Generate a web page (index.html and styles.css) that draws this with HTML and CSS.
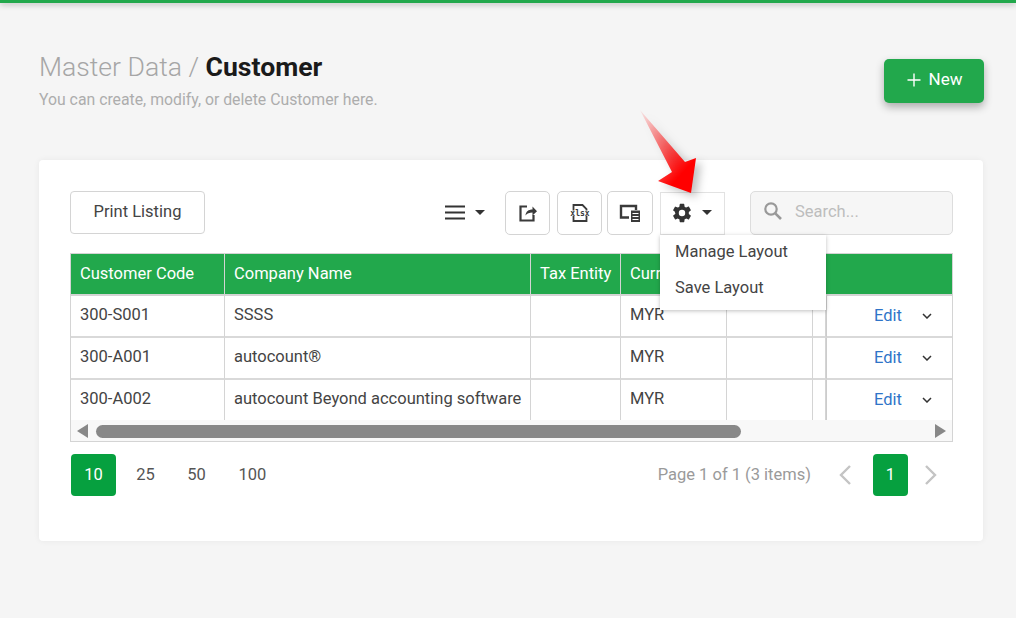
FILE: index.html
```html
<!DOCTYPE html>
<html lang="en">
<head>
<meta charset="utf-8">
<title>Customer</title>
<link rel="stylesheet" href="styles.css">
</head>
<body>
<div class="topbar"></div>
<main class="page">
  <header class="head">
    <div class="titles">
      <h1 class="title"><span class="crumb">Master Data / </span><strong>Customer</strong></h1>
      <p class="sub">You can create, modify, or delete Customer here.</p>
    </div>
    <button class="new-btn"><svg class="plus" viewBox="0 0 14 14" width="14" height="14"><path d="M7 0.5v13M0.5 7h13" stroke="#fff" stroke-width="1.4" fill="none"/></svg>New</button>
  </header>

  <section class="card">
    <div class="toolbar">
      <button class="print-btn">Print Listing</button>
      <div class="tools">
        <div class="menu-tool">
          <svg viewBox="0 0 20 15" width="20" height="15"><path d="M0 1.5h20M0 7.5h20M0 13.5h20" stroke="#333" stroke-width="2.2" fill="none"/></svg>
          <span class="caret"></span>
        </div>
        <button class="icon-btn">
          <svg viewBox="0 0 20 20" width="20" height="20"><path d="M9 3.500H2.500v14h13V12" fill="none" stroke="#3a3a3a" stroke-width="2.200"/><path d="M7.500 12.500c.3-4 3-6 7-6V3.500l4.500 4.700-4.500 4.300V9.600c-3 0-5.300.8-7 2.900z" fill="#3a3a3a"/></svg>
        </button>
        <button class="icon-btn second">
          <svg class="xlsx-icon" viewBox="0 0 20 20" width="20" height="20"><path d="M3.500 7.500V2h9l4 4v1.500M3.500 13v5h13v-5" fill="none" stroke="#3a3a3a" stroke-width="1.800"/><text x="10" y="12.700" class="xlsx">xlsx</text></svg>
        </button>
        <button class="icon-btn third">
          <svg viewBox="0 0 22 20" width="22" height="20"><path d="M10 14.500H2V3h15v4" fill="none" stroke="#3a3a3a" stroke-width="2.400"/><path d="M12 7.500h9V19h-9z" fill="#3a3a3a"/><path d="M13.500 10.500h6M13.500 13.500h6M13.500 16.500h6" stroke="#fff" stroke-width="1"/></svg>
        </button>
        <div class="gear-wrap">
          <button class="gear-btn">
            <svg viewBox="0 0 24 24" width="22" height="22"><path fill="#333" fill-rule="evenodd" d="M19.400 13c.04-.3.1-.7.100-1s-.06-.7-.1-1l2.100-1.650c.2-.15.250-.4.130-.64l-2-3.460c-.120-.22-.390-.300-.610-.220l-2.490 1c-.52-.4-1.080-.73-1.690-.98l-.38-2.650A.49.49 0 0 0 14 2h-4a.49.49 0 0 0-.49.420l-.38 2.650c-.61.250-1.170.59-1.690.98l-2.490-1a.5.5 0 0 0-.61.220l-2 3.460c-.130.220-.070.490.120.640L4.570 11c-.04.3-.7.650-.07 1s.03.7.07 1l-2.110 1.650c-.19.150-.24.420-.12.640l2 3.460c.12.220.39.300.61.220l2.490-1c.52.4 1.080.73 1.690.98l.38 2.650c.03.240.240.420.490.420h4c.250 0 .460-.180.490-.420l.38-2.650c.61-.250 1.170-.59 1.690-.98l2.490 1c.220.080.490 0 .610-.220l2-3.460c.120-.220.070-.490-.120-.640zM12 15.500a3.500 3.500 0 1 1 0-7 3.500 3.500 0 0 1 0 7z"/></svg>
            <span class="caret"></span>
          </button>
          <ul class="dropdown">
            <li>Manage Layout</li>
            <li>Save Layout</li>
          </ul>
        </div>
        <label class="search">
          <svg viewBox="0 0 20 20" width="20" height="20"><circle cx="8" cy="8" r="5.700" fill="none" stroke="#999" stroke-width="2.200"/><path d="M12.300 12.300l5.700 5.700" stroke="#999" stroke-width="2.600"/></svg>
          <span>Search...</span>
        </label>
      </div>
    </div>

    <div class="grid">
      <table class="data">
        <colgroup>
          <col class="c1"><col class="c2"><col class="c3"><col class="c4"><col class="c5"><col class="c6"><col class="c7">
        </colgroup>
        <thead>
          <tr><th>Customer Code</th><th>Company Name</th><th>Tax Entity</th><th>Currency</th><th></th><th></th><th class="last"></th></tr>
        </thead>
        <tbody>
          <tr><td>300-S001</td><td>SSSS</td><td></td><td>MYR</td><td></td><td></td><td class="last"><a class="edit">Edit</a><svg class="chev" viewBox="0 0 10 6" width="10" height="6"><path d="M1 1l4 4 4-4" fill="none" stroke="#333" stroke-width="1.500"/></svg></td></tr>
          <tr><td>300-A001</td><td>autocount®</td><td></td><td>MYR</td><td></td><td></td><td class="last"><a class="edit">Edit</a><svg class="chev" viewBox="0 0 10 6" width="10" height="6"><path d="M1 1l4 4 4-4" fill="none" stroke="#333" stroke-width="1.500"/></svg></td></tr>
          <tr><td>300-A002</td><td>autocount Beyond accounting software</td><td></td><td>MYR</td><td></td><td></td><td class="last"><a class="edit">Edit</a><svg class="chev" viewBox="0 0 10 6" width="10" height="6"><path d="M1 1l4 4 4-4" fill="none" stroke="#333" stroke-width="1.500"/></svg></td></tr>
        </tbody>
      </table>
      <div class="scrollbar">
        <span class="arrow-l"></span>
        <span class="thumb"></span>
        <span class="arrow-r"></span>
      </div>
    </div>

    <div class="pager">
      <div class="sizes">
        <span class="size on">10</span><span class="size">25</span><span class="size">50</span><span class="size">100</span>
      </div>
      <div class="pages">
        <span class="summary">Page 1 of 1 (3 items)</span>
        <svg class="nav" viewBox="0 0 14 22" width="14" height="22"><path d="M12 2L3 11l9 9" fill="none" stroke="#c4c4c4" stroke-width="2.400"/></svg>
        <span class="page-no">1</span>
        <svg class="nav" viewBox="0 0 14 22" width="14" height="22"><path d="M2 2l9 9-9 9" fill="none" stroke="#c4c4c4" stroke-width="2.400"/></svg>
      </div>
    </div>
  </section>
</main>
<svg class="pointer" viewBox="0 0 70 95" width="70" height="95">
  <defs>
    <linearGradient id="redfade" x1="0" y1="0" x2="0.75" y2="1">
      <stop offset="0" stop-color="#f00" stop-opacity="0.05"/>
      <stop offset="0.5" stop-color="#f00" stop-opacity="0.6"/>
      <stop offset="0.85" stop-color="#f00"/>
    </linearGradient>
  </defs>
  <path d="M5 5L50 57 61 53 56 88 23 76 37 67Z" fill="url(#redfade)"/>
</svg>
</body>
</html>
```
FILE: styles.css
```css
* { box-sizing: border-box; }
html, body { margin: 0; height: 100%; }
body {
  width: 1016px;
  height: 618px;
  overflow: hidden;
  position: relative;
  background: #f5f5f5;
  font-family: Roboto, "Liberation Sans", sans-serif;
  font-size: 16.5px;
  color: #444;
}
.topbar {
  height: 3px;
  background: #22a84c;
  box-shadow: 0 1px 6px rgba(0,0,0,.35);
}
.page { padding: 48px 33px 0 39px; }
.head {
  display: flex;
  justify-content: space-between;
  align-items: flex-start;
  height: 109px;
}
.title {
  margin: 0;
  font-size: 26.600px;
  line-height: 32px;
  font-weight: 400;
  color: #1a1a1a;
}
.title strong { font-weight: 700; }
.crumb { font-weight: 300; color: #a6a6a6; }
.sub {
  margin: 7px 0 0;
  font-size: 15.800px;
  line-height: 20px;
  color: #adadad;
}
.new-btn {
  display: flex;
  align-items: center;
  justify-content: center;
  gap: 8px;
  width: 100px;
  height: 44px;
  margin-top: 8px;
  margin-right: -1px;
  padding: 0 0 5px 1px;
  border: 0;
  border-radius: 5px;
  background: #22a84c;
  color: #fff;
  font: 400 17px Roboto, sans-serif;
  box-shadow: 0 4px 8px rgba(0,0,0,.3);
}
.plus { margin-top: 3px; }
.card {
  height: 381px;
  background: #fff;
  border-radius: 4px;
  padding: 31px 30px 0 31px;
  box-shadow: 0 0 6px rgba(0,0,0,.06);
}
.toolbar {
  display: flex;
  justify-content: space-between;
  align-items: flex-start;
  height: 62px;
}
.print-btn {
  width: 135px;
  height: 43px;
  padding: 0 0 3px;
  border: 1px solid #d4d4d4;
  border-radius: 4px;
  background: #fff;
  color: #444;
  font: 400 16.500px Roboto, sans-serif;
}
.tools { display: flex; align-items: flex-start; }
.menu-tool {
  display: flex;
  align-items: center;
  gap: 10px;
  height: 42px;
  width: 60px;
}
.caret {
  display: inline-block;
  width: 0;
  height: 0;
  border-left: 5px solid transparent;
  border-right: 5px solid transparent;
  border-top: 5px solid #333;
}
.icon-btn {
  display: flex;
  align-items: center;
  justify-content: center;
  width: 45px;
  height: 44px;
  margin-right: 7px;
  padding: 0 0 1px;
  border: 1px solid #d4d4d4;
  border-radius: 5px;
  background: #fff;
}
.icon-btn.second { margin-right: 5px; }
.icon-btn.third { width: 46px; }
.xlsx-icon { overflow: visible; }
.xlsx {
  font: 700 8px "DejaVu Sans Mono", monospace;
  fill: #3a3a3a;
  text-anchor: middle;
}
.gear-wrap { position: relative; width: 65px; margin-right: 25px; }
.gear-btn {
  display: flex;
  align-items: center;
  gap: 9px;
  width: 65px;
  height: 43px;
  margin-top: 1px;
  padding: 0 0 2px 10px;
  border: 1px solid #e2e2e2;
  background: #fff;
}
.dropdown {
  position: absolute;
  top: 44px;
  left: 0;
  z-index: 5;
  width: 166px;
  height: 75px;
  margin: 0;
  padding: 0;
  list-style: none;
  background: #fff;
  box-shadow: 0 1px 4px rgba(0,0,0,.25);
}
.dropdown li {
  height: 36px;
  padding: 0 15px;
  line-height: 33px;
  color: #444;
}
.search {
  display: flex;
  align-items: center;
  gap: 12px;
  width: 203px;
  height: 44px;
  padding: 0 0 4px 12px;
  border: 1px solid #ddd;
  border-radius: 5px;
  background: #f6f6f6;
  color: #bdbdbd;
}
.grid {
  width: 883px;
  height: 189px;
  border: 1px solid #d4d4d4;
  overflow: hidden;
}
.data {
  width: 881px;
  table-layout: fixed;
  border-collapse: separate;
  border-spacing: 0;
}
.c1 { width: 154px; }
.c2 { width: 306px; }
.c3 { width: 90px; }
.c4 { width: 106px; }
.c5 { width: 86px; }
.c6 { width: 13px; }
.c7 { width: 126px; }
th {
  height: 42px;
  padding: 0 9px 2px;
  background: #22a84c;
  color: #fff;
  font-weight: 400;
  font-size: 16.500px;
  text-align: left;
  white-space: nowrap;
  overflow: hidden;
  border-right: 1px solid #d4d4d4;
  border-bottom: 2px solid #d4d4d4;
}
td {
  height: 42px;
  padding: 0 9px 3px;
  white-space: nowrap;
  color: #444;
  border-right: 1px solid #d4d4d4;
  border-bottom: 2px solid #d9d9d9;
}
tbody tr:last-child td { height: 40px; border-bottom: 0; }
td.last { padding-bottom: 1px; }
.last { border-right: 0; border-left: 1px solid #ccc; text-align: right; padding-right: 20px; }
th.last { border-left: 0; }
.edit { color: #2f74c8; }
.chev { margin-left: 20px; vertical-align: 2px; }
.scrollbar {
  display: flex;
  align-items: center;
  height: 22px;
  padding: 0 6px;
  background: #f8f8f8;
}
.arrow-l, .arrow-r {
  width: 0;
  height: 0;
  border-top: 7px solid transparent;
  border-bottom: 7px solid transparent;
}
.arrow-l { border-right: 11px solid #888; }
.arrow-r { border-left: 11px solid #888; margin-left: auto; }
.thumb {
  width: 645px;
  height: 13px;
  margin-left: 8px;
  border-radius: 7px;
  background: #888;
}
.pager {
  display: flex;
  justify-content: space-between;
  align-items: center;
  height: 42px;
  margin-top: 12px;
  padding-left: 1px;
}
.sizes { display: flex; align-items: center; }
.size {
  display: flex;
  align-items: center;
  justify-content: center;
  width: 45px;
  height: 42px;
  margin-right: 6px;
  padding-bottom: 2px;
  color: #555;
}
.size:last-child { margin-left: 5px; }
.size.on {
  margin-right: 7px;
  background: #06a03f;
  border-radius: 4px;
  color: #fff;
  font-weight: 400;
}
.pages {
  display: flex;
  align-items: center;
  padding-right: 15px;
}
.summary { color: #9a9a9a; margin-right: 27px; padding-bottom: 2px; }
.page-no {
  display: flex;
  align-items: center;
  justify-content: center;
  width: 35px;
  height: 42px;
  margin: 0 16px 0 21px;
  padding-bottom: 2px;
  background: #06a03f;
  border-radius: 4px;
  color: #fff;
  font-weight: 400;
}
.nav { flex: none; }
.pointer {
  position: absolute;
  left: 635px;
  top: 105px;
  z-index: 8;
  filter: drop-shadow(5px 4px 4px rgba(0,0,0,.25));
}
```
